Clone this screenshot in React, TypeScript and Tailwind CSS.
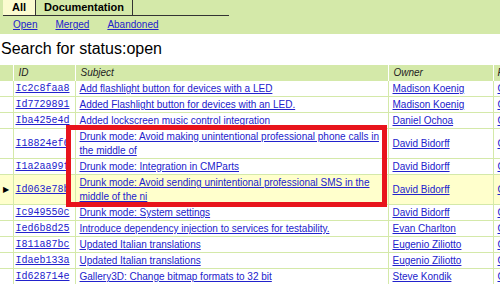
import React from 'react';

type Change = {
  id: string;
  subject: string;
  owner: string;
  project: string;
  current?: boolean;
};

const changes: Change[] = [
  { id: 'Ic2c8faa8', subject: 'Add flashlight button for devices with a LED', owner: 'Madison Koenig', project: 'CyanogenMod/android_frameworks_base' },
  { id: 'Id7729891', subject: 'Added Flashlight button for devices with an LED.', owner: 'Madison Koenig', project: 'CyanogenMod/android_packages_apps_Settings' },
  { id: 'Iba425e4d', subject: 'Added lockscreen music control integration', owner: 'Daniel Ochoa', project: 'CyanogenMod/android_frameworks_base' },
  { id: 'I18824ef6', subject: 'Drunk mode: Avoid making unintentional professional phone calls in the middle of', owner: 'David Bidorff', project: 'CyanogenMod/android_packages_apps_Phone' },
  { id: 'I1a2aa99f', subject: 'Drunk mode: Integration in CMParts', owner: 'David Bidorff', project: 'CyanogenMod/android_packages_apps_CMParts' },
  { id: 'Id063e78b', subject: 'Drunk mode: Avoid sending unintentional professional SMS in the middle of the ni', owner: 'David Bidorff', project: 'CyanogenMod/android_packages_apps_Mms', current: true },
  { id: 'Ic949550c', subject: 'Drunk mode: System settings', owner: 'David Bidorff', project: 'CyanogenMod/android_frameworks_base' },
  { id: 'Ied6b8d25', subject: 'Introduce dependency injection to services for testability.', owner: 'Evan Charlton', project: 'CyanogenMod/android_packages_apps_Email' },
  { id: 'I811a87bc', subject: 'Updated Italian translations', owner: 'Eugenio Ziliotto', project: 'CyanogenMod/android_packages_apps_CMParts' },
  { id: 'Idaeb133a', subject: 'Updated Italian translations', owner: 'Eugenio Ziliotto', project: 'CyanogenMod/android_packages_apps_Settings' },
  { id: 'Id628714e', subject: 'Gallery3D: Change bitmap formats to 32 bit', owner: 'Steve Kondik', project: 'CyanogenMod/android_packages_apps_Gallery3D' },
];

const link = 'text-[#2222cc] underline';
const cell = 'border-b border-[#d4e9a9] pt-px pb-0 leading-[14px] align-middle';

export default function App() {
  return (
    <div className="relative w-[500px] h-[284px] overflow-hidden bg-white text-black font-['Liberation_Sans',Arial,sans-serif]">
      {/* top menu */}
      <div className="bg-[#d4e9a9] h-[34px]">
        <div className="flex ml-[3px] w-[226px] h-[16px] border-b border-[#333]">
          <div className="w-[33px] bg-[#fbfbd0] border-r border-[#333] text-[11px] font-bold leading-[15px] text-center">
            All
          </div>
          <div className="w-[97px] border-r border-[#333] text-[11px] font-bold leading-[15px] text-center">
            Documentation
          </div>
        </div>
        <div className="flex text-[10px] leading-[16px] pl-[13px] pt-px">
          <a className={`${link} mr-[18px]`}>Open</a>
          <a className={`${link} mr-[18px]`}>Merged</a>
          <a className={link}>Abandoned</a>
        </div>
      </div>

      <h1 className="h-[31px] text-[16px] leading-[29px] pl-px">Search for status:open</h1>

      <table className="border-collapse text-[10px] table-fixed w-[620px]">
        <colgroup>
          <col className="w-[13px]" />
          <col className="w-[62px]" />
          <col className="w-[313px]" />
          <col className="w-[105px]" />
          <col className="w-[127px]" />
        </colgroup>
        <thead>
          <tr className="bg-[#d4e9a9] text-[#222] italic">
            <th className="border-r border-white h-[16px] p-0"></th>
            <th className="border-r border-white text-left font-normal pl-[5px] p-0 leading-[16px]">ID</th>
            <th className="border-r border-white text-left font-normal pl-[5px] p-0 leading-[16px]">Subject</th>
            <th className="border-r border-white text-left font-normal pl-[5px] p-0 leading-[16px]">Owner</th>
            <th className="text-left font-normal pl-[4px] p-0 leading-[16px] whitespace-nowrap">Project</th>
          </tr>
        </thead>
        <tbody>
          {changes.map((c) => (
            <tr key={c.id} className={c.current ? 'bg-[#ffffcc]' : 'bg-white'}>
              <td className={`${cell} border-r text-[8px] text-center`}>
                {c.current ? '▶' : ''}
              </td>
              <td className={`${cell} border-r pl-[2px] font-['Liberation_Mono','Courier_New',monospace]`}>
                <a className={link}>{c.id}</a>
              </td>
              <td className={`${cell} border-r pl-[4px] pr-[2px]`}>
                <a className={link}>{c.subject}</a>
              </td>
              <td className={`${cell} border-r pl-[4px] whitespace-nowrap`}>
                <a className={link}>{c.owner}</a>
              </td>
              <td className={`${cell} pl-[4px] whitespace-nowrap overflow-hidden`}>
                <a className={link}>{c.project}</a>
              </td>
            </tr>
          ))}
        </tbody>
      </table>

      {/* highlight box drawn over the screenshot */}
      <div className="absolute left-[66px] top-[125px] w-[321px] h-[82px] border-[5px] border-[#e8141c] pointer-events-none" />
    </div>
  );
}
